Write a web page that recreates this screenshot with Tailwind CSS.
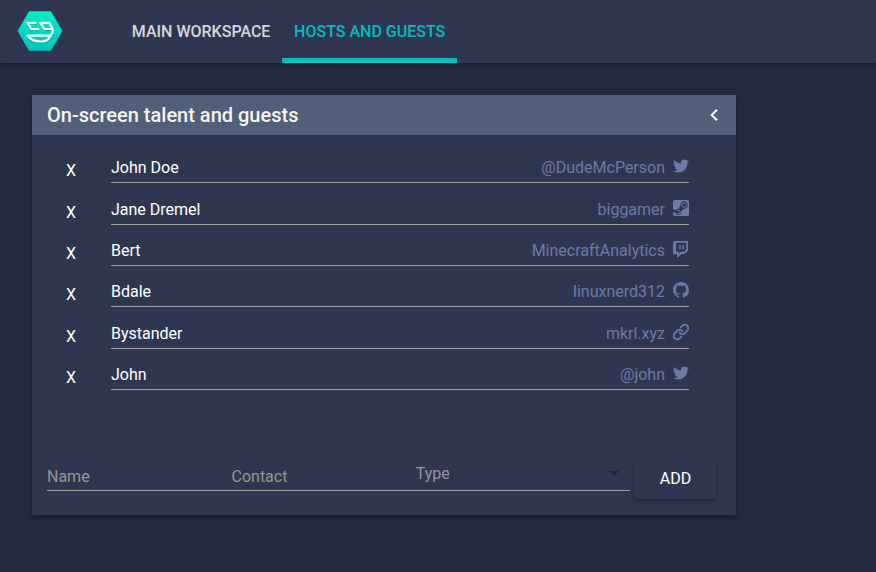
<!DOCTYPE html>
<html lang="en">
<head>
<meta charset="utf-8">
<title>Hosts and guests</title>
<script src="https://cdn.jsdelivr.net/npm/@tailwindcss/browser@4"></script>
</head>
<body class="h-[572px] overflow-hidden bg-[#242a3b] font-[Roboto,sans-serif] text-base text-white">
<svg class="hidden">
  <symbol id="twitter" viewBox="0 0 512 512"><path d="M459.37 151.716c.325 4.548.325 9.097.325 13.645 0 138.72-105.583 298.558-298.558 298.558-59.452 0-114.68-17.219-161.137-47.106 8.447.974 16.568 1.299 25.34 1.299 49.055 0 94.213-16.568 130.274-44.832-46.132-.975-84.792-31.188-98.112-72.772 6.498.974 12.995 1.624 19.818 1.624 9.421 0 18.843-1.3 27.614-3.573-48.081-9.747-84.143-51.98-84.143-102.985v-1.299c13.969 7.797 30.214 12.67 47.431 13.319-28.264-18.843-46.781-51.005-46.781-87.391 0-19.492 5.197-37.36 14.294-52.954 51.655 63.675 129.3 105.258 216.365 109.807-1.624-7.797-2.599-15.918-2.599-24.04 0-57.828 46.782-104.934 104.934-104.934 30.213 0 57.502 12.67 76.67 33.137 23.715-4.548 46.456-13.32 66.599-25.34-7.798 24.366-24.366 44.833-46.132 57.827 21.117-2.273 41.584-8.122 60.426-16.243-14.292 20.791-32.161 39.308-52.628 54.253z"/></symbol>
  <symbol id="steam" viewBox="0 0 16 16"><rect width="16" height="16" rx="1.7"/><path fill="#2f3750" d="M0 9.200 2.600 10.300A2.900 2.900 0 0 1 5 9.200L7.500 5.800A3.700 3.700 0 1 1 11.200 8.700L8 11.200A2.900 2.900 0 0 1 2.400 12.900L0 12Z"/><circle cx="11.200" cy="5" r="2.300" fill="none" stroke="currentColor" stroke-width="1"/><circle cx="11.200" cy="5" r="1" fill="#2f3750"/><path d="M3.400 12.900A1.950 1.950 0 1 0 4.600 10.200" fill="none" stroke="currentColor" stroke-width="1"/></symbol>
  <symbol id="twitch" viewBox="0 0 16 16"><path fill-rule="evenodd" d="M1 0H15V9.600L11.600 13H8.400L5.500 16H4V13.300H0V2.600ZM3.200 1.800V10.700H5.700V12.700L7.700 10.700H11L13.200 8.500V1.800Z"/><path d="M6.200 4.200h1.500v4H6.200zM9.300 4.200h1.500v4H9.300z"/></symbol>
  <symbol id="github" viewBox="0 0 16 16"><path d="M8 0C3.58 0 0 3.58 0 8c0 3.54 2.29 6.53 5.47 7.59.4.07.55-.17.55-.38 0-.19-.01-.82-.01-1.49-2.01.37-2.53-.49-2.69-.94-.09-.23-.48-.94-.82-1.13-.28-.15-.68-.52-.01-.53.63-.01 1.08.58 1.23.82.72 1.21 1.87.87 2.33.66.07-.52.28-.87.51-1.07-1.78-.2-3.64-.89-3.64-3.95 0-.87.31-1.59.82-2.15-.08-.2-.36-1.02.08-2.12 0 0 .67-.21 2.2.82.64-.18 1.32-.27 2-.27s1.36.09 2 .27c1.53-1.04 2.2-.82 2.2-.82.44 1.1.16 1.92.08 2.12.51.56.82 1.27.82 2.15 0 3.07-1.87 3.75-3.65 3.95.29.25.54.73.54 1.48 0 1.07-.01 1.93-.01 2.2 0 .21.15.46.55.38A8.01 8.01 0 0 0 16 8c0-4.42-3.58-8-8-8z"/></symbol>
  <symbol id="link" viewBox="0.500 0.500 23 23"><g fill="none" stroke="currentColor" stroke-width="2.600" stroke-linecap="round"><path d="M10 13a5 5 0 0 0 7.540.540l3.500-3.500a5 5 0 0 0-7.070-7.070l-2.500 2.500"/><path d="M14 11a5 5 0 0 0-7.540-.540l-3.500 3.500a5 5 0 0 0 7.070 7.070l2.500-2.500"/></g></symbol>
</svg>

<header class="flex h-[63px] bg-[#2f3750] shadow-[0_1px_4px_rgba(0,0,0,0.35)]">
  <div class="w-[119.800px] pt-[11px] pl-[17px]">
    <svg width="46" height="40" viewBox="0 0 46 40">
      <defs><linearGradient id="mint" x1="0" y1="0" x2="0" y2="1"><stop offset="0" stop-color="#00f0c3"/><stop offset="1" stop-color="#00c3be"/></linearGradient></defs>
      <path d="M12.500 1h21L44.500 20 33.500 39h-21L1.500 20Z" fill="url(#mint)" stroke="url(#mint)" stroke-width="1.500" stroke-linejoin="round"/>
      <path d="M20 13H11l3.500 6.500H22M27 19.500H35.500M10.800 26C13 30 18 32 24 32S32 30 34.500 26" fill="none" stroke="#009f9b" stroke-opacity=".3" stroke-width="2.500"/>
      <g fill="none" stroke="#fff" stroke-width="2.200" stroke-linejoin="round">
        <path d="M19.800 11.800H10.500L14.300 18H22.300"/>
        <path d="M35.700 18H27.500L23.300 11.800H32.300L35.700 18V21L33.300 24.700"/>
        <path d="M10.500 24.700H33.300C32 28.500 29 30.500 24.500 30.500C18 30.500 13.500 28.500 10.500 24.700Z"/>
      </g>
    </svg>
  </div>
  <nav class="flex font-medium leading-[63px]">
    <a class="px-3 text-[#d5d7dc]">MAIN WORKSPACE</a>
    <a class="-ml-[0.300px] border-b-5 border-[#00bebe] px-3 text-[#00bebe] h-[63px]">HOSTS AND GUESTS</a>
  </nav>
</header>

<main class="mt-8 ml-8 flex h-[420px] w-[704px] flex-col bg-[#2f3750] shadow-[0_2px_4px_rgba(0,0,0,0.35)]">
  <div class="flex h-10 items-center justify-between bg-[#525f78] pr-[17.500px] pl-[15px] text-xl font-medium text-[#f4f4f4]">
    <h1>On-screen talent and guests</h1>
    <svg width="10" height="14" viewBox="0 0 10 14" fill="none" stroke="#fff" stroke-width="2"><path d="M8 1.700 2.700 7 8 12.300"/></svg>
  </div>
  <ul class="pt-[6.800px] pr-[47px] pl-[34px]">
    <li class="flex h-[41.400px] items-end"><button class="mr-[35px] w-[10px] leading-6">X</button><div class="flex h-[27px] flex-1 items-start border-b border-[#a09f9b]"><span class="leading-6 mr-auto">John Doe</span><span class="leading-6 mr-2 text-[#6c7aa5]">@DudeMcPerson</span><svg class="mt-[2px] size-4 fill-current text-[#6c7aa5]"><use href="#twitter"/></svg></div></li>
    <li class="flex h-[41.400px] items-end"><button class="mr-[35px] w-[10px] leading-6">X</button><div class="flex h-[27px] flex-1 items-start border-b border-[#a09f9b]"><span class="leading-6 mr-auto">Jane Dremel</span><span class="leading-6 mr-2 text-[#6c7aa5]">biggamer</span><svg class="mt-[2px] size-4 fill-current text-[#6c7aa5]"><use href="#steam"/></svg></div></li>
    <li class="flex h-[41.400px] items-end"><button class="mr-[35px] w-[10px] leading-6">X</button><div class="flex h-[27px] flex-1 items-start border-b border-[#a09f9b]"><span class="leading-6 mr-auto">Bert</span><span class="leading-6 mr-2 text-[#6c7aa5]">MinecraftAnalytics</span><svg class="mt-[2px] size-4 fill-current text-[#6c7aa5]"><use href="#twitch"/></svg></div></li>
    <li class="flex h-[41.400px] items-end"><button class="mr-[35px] w-[10px] leading-6">X</button><div class="flex h-[27px] flex-1 items-start border-b border-[#a09f9b]"><span class="leading-6 mr-auto">Bdale</span><span class="leading-6 mr-2 text-[#6c7aa5]">linuxnerd312</span><svg class="mt-[2px] size-4 fill-current text-[#6c7aa5]"><use href="#github"/></svg></div></li>
    <li class="flex h-[41.400px] items-end"><button class="mr-[35px] w-[10px] leading-6">X</button><div class="flex h-[27px] flex-1 items-start border-b border-[#a09f9b]"><span class="leading-6 mr-auto">Bystander</span><span class="leading-6 mr-2 text-[#6c7aa5]">mkrl.xyz</span><svg class="mt-[2px] size-4 fill-current text-[#6c7aa5]"><use href="#link"/></svg></div></li>
    <li class="flex h-[41.400px] items-end"><button class="mr-[35px] w-[10px] leading-6">X</button><div class="flex h-[27px] flex-1 items-start border-b border-[#a09f9b]"><span class="leading-6 mr-auto">John</span><span class="leading-6 mr-2 text-[#6c7aa5]">@john</span><svg class="mt-[2px] size-4 fill-current text-[#6c7aa5]"><use href="#twitter"/></svg></div></li>
  </ul>
  <form class="mt-auto mb-4 flex items-start pl-[15px] text-[#969698]">
    <div class="mr-1 flex h-[33px] w-[583px] border-b border-[#a09f9b] leading-6">
      <span class="w-[184.500px] pt-[7px]">Name</span>
      <span class="w-[184.300px] pt-[7px]">Contact</span>
      <span class="flex-1 pt-1">Type</span>
      <svg class="mt-[13px] mr-[11px]" width="10" height="5"><path d="M0 0h10L5 5z" fill="#1f2535"/></svg>
    </div>
    <button type="button" class="h-[41px] w-[82px] rounded-[3px] pl-px text-white shadow-[0_2px_3px_rgba(0,0,0,0.25),0_1px_3px_rgba(0,0,0,0.15)]">ADD</button>
  </form>
</main>
</body>
</html>
